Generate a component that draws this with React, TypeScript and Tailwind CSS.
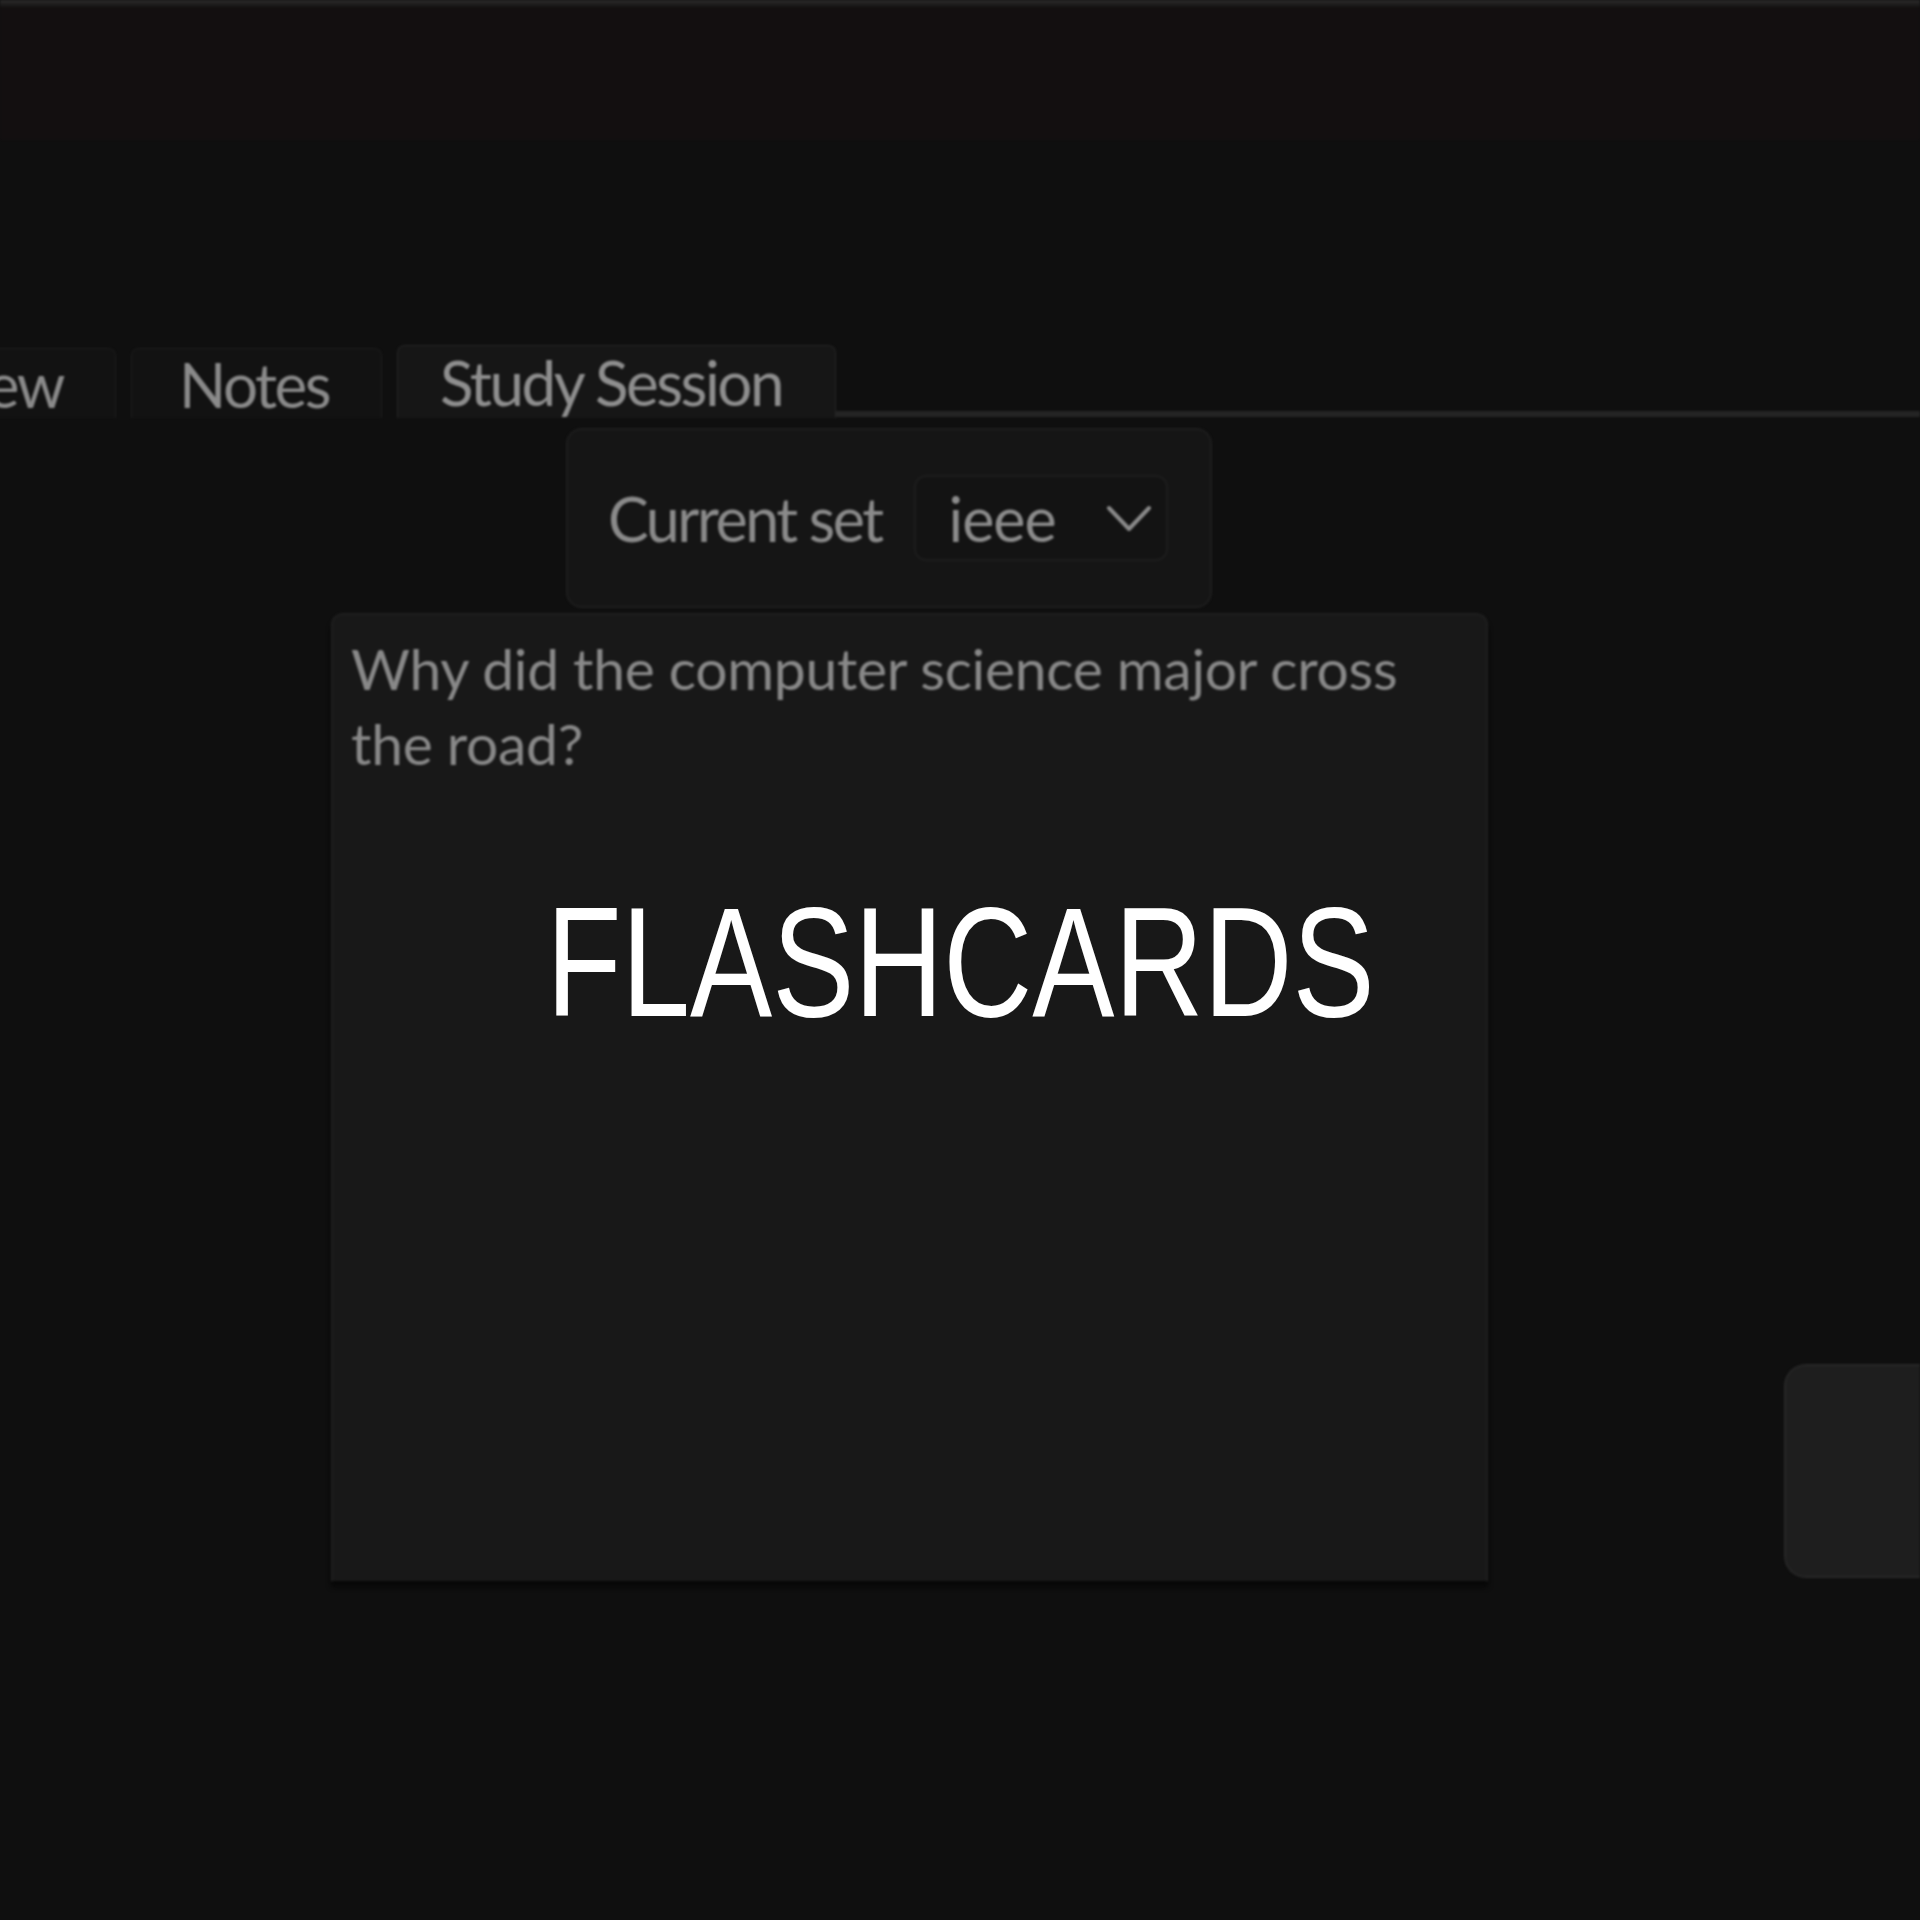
import React from 'react';

const ui = { fontFamily: 'Lato, "Noto Sans", sans-serif' };
const title = { fontFamily: '"Liberation Sans", Arial, sans-serif' };

const Tab = ({ label, active, className = '' }: { label: string; active?: boolean; className?: string }) => (
  <div
    className={
      'flex items-center rounded-t-lg border border-b-0 text-[62px] tracking-[-2.5px] ' +
      (active
        ? 'h-[73px] border-[#262626] bg-[#161616] text-[#8e8e8e]'
        : 'h-[70px] border-[#1d1d1d] bg-[#121212] text-[#8a8a8a]') +
      ' ' +
      className
    }
  >
    <span className="leading-none">{label}</span>
  </div>
);

const Chevron = () => (
  <svg width="46" height="27" viewBox="0 0 46 27" fill="none">
    <polyline points="3,3 23,24 43,3" stroke="#8a8a8a" strokeWidth="4" strokeLinecap="round" strokeLinejoin="round" />
  </svg>
);

export default function App() {
  return (
    <div className="relative h-[1920px] w-full overflow-hidden bg-[#0f0f0f]">
      <div className="blur-[1px]" style={ui}>
        {/* window header */}
        <div className="h-[7px] bg-gradient-to-b from-[#2c2c2c] to-[#161414]" />
        <div className="h-[133px] bg-[#130f10]" />

        {/* tabs */}
        <div className="mt-[205px] flex items-end">
          <div className="-ml-[184px] flex items-end gap-[15px]">
            <Tab label="Overview" className="w-[300px] justify-end pr-[52px]" />
            <Tab label="Notes" className="w-[251px] pl-[47px]" />
            <Tab label="Study Session" active className="w-[439px] pl-[42px]" />
          </div>
          <div className="mb-[1px] h-[6px] flex-1 bg-[#242424]" />
        </div>

        {/* session content */}
        <div className="flex items-end">
          <div className="ml-[331px] flex w-[1157px] flex-col">
            <div className="ml-[235px] mt-[10px] flex h-[180px] w-[646px] items-center gap-[32px] rounded-2xl border-2 border-[#1e1e1e] bg-[#151515] pl-[40px]">
              <span className="text-[61px] leading-none tracking-[-2.5px] text-[#8a8a8a]">Current set</span>
              <div className="flex h-[86px] w-[254px] items-center justify-between rounded-xl border-2 border-[#1d1d1d] bg-[#131313] pl-[33px] pr-[14px]">
                <span className="text-[61px] leading-none tracking-[-1px] text-[#8c8c8c]">ieee</span>
                <Chevron />
              </div>
            </div>
            <div className="mt-[5px] h-[968px] rounded-t-xl border-2 border-b-0 border-[#1f1f1f] bg-[#181818] px-[18px] pt-[16px] shadow-[0_6px_4px_#070707]">
              <p className="text-[57px] leading-[75px] tracking-[-0.3px] text-[#888888]">
                Why did the computer science major cross the road?
              </p>
            </div>
          </div>
          <div className="mb-[3px] ml-[296px] h-[214px] flex-1 rounded-l-[22px] border-2 border-r-0 border-[#272727] bg-[#1e1e1e]" />
        </div>
      </div>

      {/* overlay title */}
      <div className="absolute inset-x-0 top-[884px] flex justify-center">
        <h1 className="scale-x-[0.79] text-[156px] leading-none text-white" style={title}>
          FLASHCARDS
        </h1>
      </div>
    </div>
  );
}
